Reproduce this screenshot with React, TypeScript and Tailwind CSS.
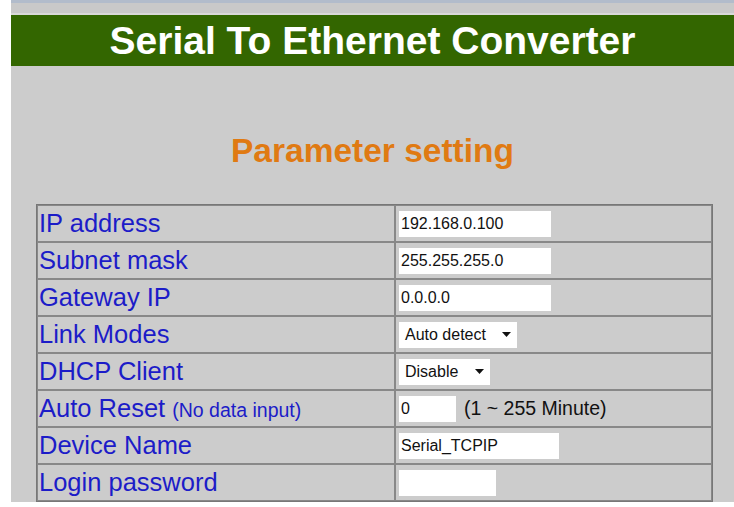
import React from "react";

const font = { fontFamily: '"Liberation Sans", Arial, Helvetica, sans-serif' };

function TextBox({ value, w }: { value: string; w: string }) {
  return (
    <div className={`${w} h-[26px] bg-white flex items-center pl-[2px] text-[16px] text-[#111] leading-none`}>
      {value}
    </div>
  );
}

function SelectBox({ value, w }: { value: string; w: string }) {
  return (
    <div className={`${w} h-[26px] bg-white flex items-center justify-between pl-[6px] pr-[6px] text-[16px] text-[#111] leading-none`}>
      <span>{value}</span>
      <svg width="9" height="5" viewBox="0 0 9 5">
        <path d="M0 0 L9 0 L4.5 5 Z" fill="#111" />
      </svg>
    </div>
  );
}

const rows: { label: React.ReactNode; value: React.ReactNode }[] = [
  { label: "IP address", value: <TextBox value="192.168.0.100" w="w-[152px]" /> },
  { label: "Subnet mask", value: <TextBox value="255.255.255.0" w="w-[152px]" /> },
  { label: "Gateway IP", value: <TextBox value="0.0.0.0" w="w-[152px]" /> },
  { label: "Link Modes", value: <SelectBox value="Auto detect" w="w-[118px]" /> },
  { label: "DHCP Client", value: <SelectBox value="Disable" w="w-[91px]" /> },
  {
    label: (
      <>
        Auto Reset <span className="text-[19.5px]">(No data input)</span>
      </>
    ),
    value: (
      <div className="flex items-center gap-[8px]">
        <TextBox value="0" w="w-[57px]" />
        <span className="text-[19.5px] text-[#111] leading-none">(1 ~ 255 Minute)</span>
      </div>
    ),
  },
  { label: "Device Name", value: <TextBox value="Serial_TCPIP" w="w-[160px]" /> },
  { label: "Login password", value: <TextBox value="" w="w-[97px]" /> },
];

export default function App() {
  return (
    <div className="w-[734px] h-[507px] bg-white overflow-hidden" style={font}>
      <div className="ml-[11px] h-[502px] bg-[#cccccc] overflow-hidden flex flex-col">
        <div className="h-[3px] bg-[#b2bccb]" />
        <div className="h-[10px] bg-[#c9c9c9]" />
        <div className="h-[2px] bg-[#d9d9d9]" />
        <div className="h-[52px] bg-[#336600] flex items-center justify-center">
          <h1 className="text-white font-bold text-[39px] leading-none tracking-[0px]">
            Serial To Ethernet Converter
          </h1>
        </div>
        <div className="h-[66px]" />
        <h2 className="text-center text-[#e07a12] font-bold text-[33.5px] leading-[40px] h-[40px]">
          Parameter setting
        </h2>
        <div className="h-[34px]" />
        <table className="ml-[25px] w-[677px] border-separate border-spacing-0 border border-[#777777]">
          <tbody>
            {rows.map((r, i) => (
              <tr key={i} className="h-[37px]">
                <td className="w-[358px] border border-[#888888] px-[1px] align-middle text-[25.5px] leading-none text-[#1c1cc8] whitespace-nowrap">
                  {r.label}
                </td>
                <td className="border border-[#888888] pl-[3px] align-middle">{r.value}</td>
              </tr>
            ))}
          </tbody>
        </table>
      </div>
    </div>
  );
}
